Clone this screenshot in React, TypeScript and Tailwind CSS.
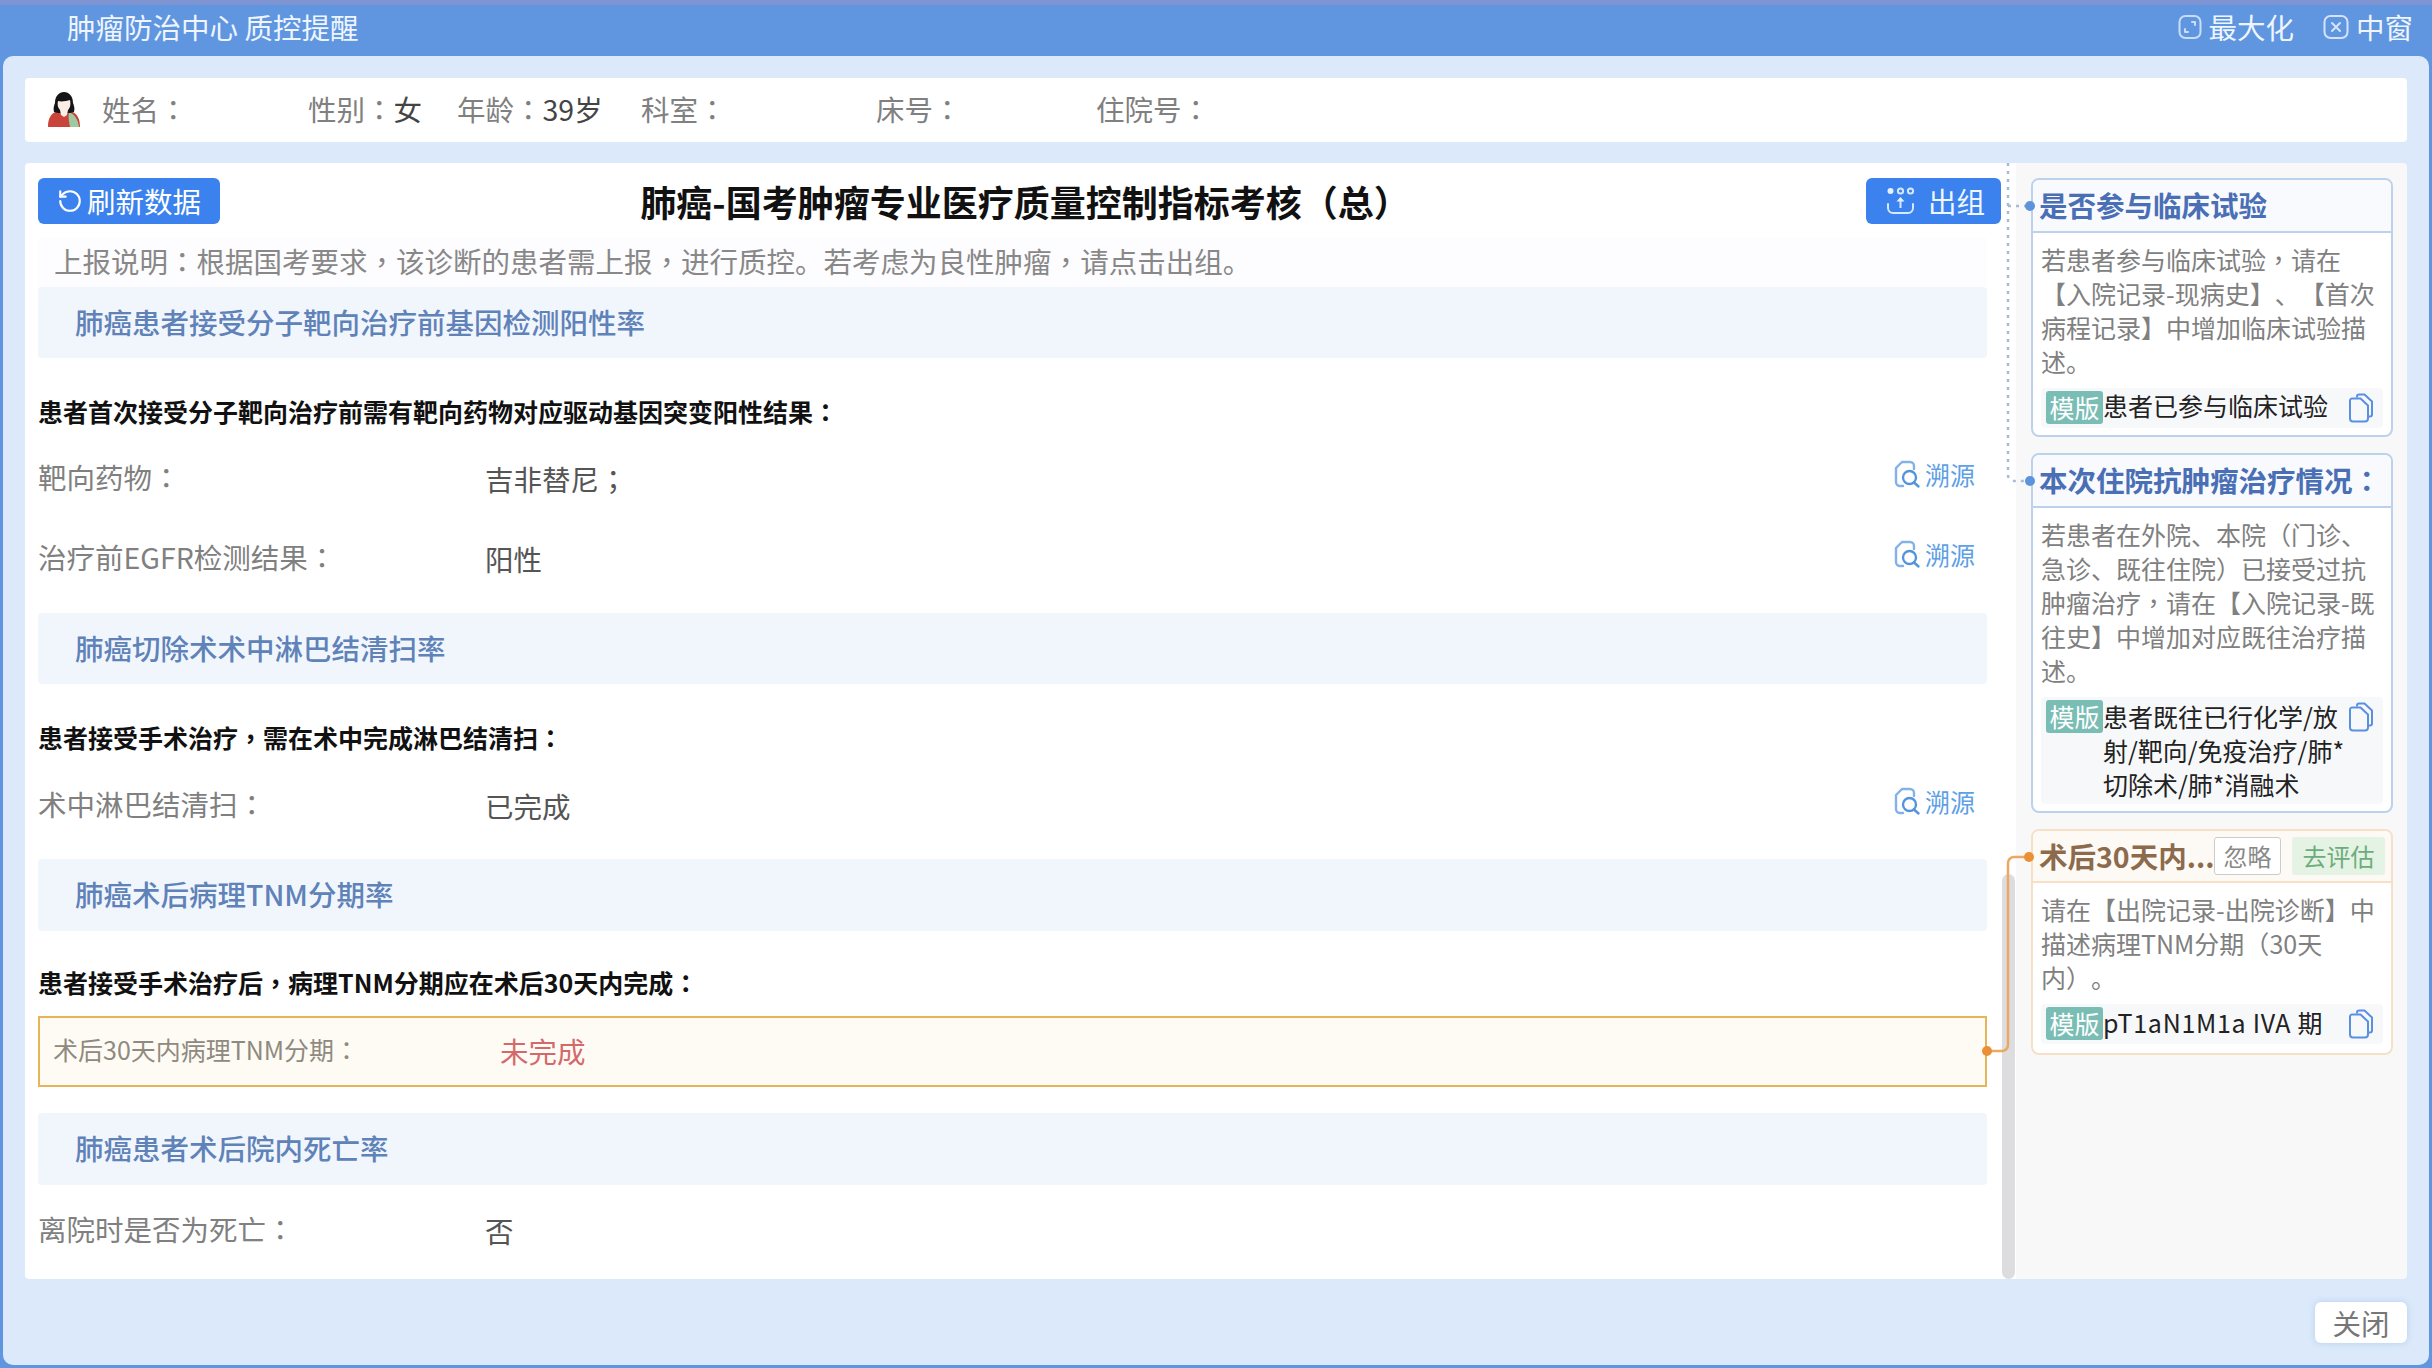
import { RotateCcw } from "lucide-react";
import type { ReactNode } from "react";

const FONT = "font-['Noto_Sans_CJK_SC','Noto_Sans',sans-serif]";

function P(text: string): ReactNode {
  return text.split(/([，：；（）])/).map((part, i) =>
    /^[，：；（）]$/.test(part) ? (
      <span key={i} className="font-['Noto_Sans_CJK_TC','Noto_Sans_CJK_SC',sans-serif]">
        {part}
      </span>
    ) : (
      part
    ),
  );
}

function Avatar() {
  return (
    <svg width="34" height="36" viewBox="0 0 34 36" className="shrink-0">
      <path d="M1 36c0-9 3-14 10-16l6 3 6-3c7 2 10 7 10 16z" fill="#c9443a" />
      <path d="M22 21c5 2 9 7 10 15h-9c-1-5-2-10-1-15z" fill="#9dcaa0" />
      <path d="M7 21c-1-4 0-6 1-9 0-7 4-11 9-11s9 4 9 11c1 3 2 5 1 9l-4 1-12 0z" fill="#151515" />
      <path d="M11 10c3 1 9 0 12-1 1 5 0 8-2 10l-1 5-3 2-3-2-1-5c-2-2-3-5-2-9z" fill="#fbeee6" />
    </svg>
  );
}

function GroupOutIcon() {
  return (
    <svg width="30" height="30" viewBox="0 0 30 30" fill="none" stroke="#d6e8fd" strokeWidth="2" className="shrink-0">
      <circle cx="4.5" cy="5" r="3" fill="#e6f1fe" stroke="none" />
      <circle cx="14.5" cy="5" r="2.6" />
      <circle cx="24.5" cy="5" r="2.6" />
      <path d="M14.5 22V13" />
      <path d="M10.5 15.5l4-4.5 4 4.5z" fill="#e6f1fe" stroke="none" />
      <path d="M2 18v4a5 5 0 0 0 5 5h15a5 5 0 0 0 5-5v-4" strokeLinecap="round" />
    </svg>
  );
}

function MaxIcon() {
  return (
    <svg width="24" height="26" viewBox="0 0 24 26" fill="none" stroke="#c9ddf7" strokeWidth="2" className="shrink-0">
      <rect x="1.5" y="2" width="21" height="22" rx="6" />
      <path d="M14 8h3v3M10 18H7v-3" strokeLinecap="round" strokeLinejoin="round" />
    </svg>
  );
}

function CloseIcon() {
  return (
    <svg width="26" height="26" viewBox="0 0 26 26" fill="none" stroke="#d3e4f9" strokeWidth="2" className="shrink-0">
      <rect x="1.5" y="2" width="23" height="22" rx="6" />
      <path d="M9 9l8 8M17 9l-8 8" strokeLinecap="round" />
    </svg>
  );
}

function TraceIcon() {
  return (
    <svg width="27" height="29" viewBox="0 0 27 29" fill="none" stroke="#82b2e8" strokeWidth="2.4" className="shrink-0">
      <path d="M9 26H6a4 4 0 0 1-4-4V8l6-6h8a4 4 0 0 1 4 4v3" strokeLinecap="round" strokeLinejoin="round" />
      <circle cx="15.5" cy="17.5" r="6.5" stroke="#5594dc" />
      <path d="M20 22.5l4.5 4" stroke="#5594dc" strokeLinecap="round" />
    </svg>
  );
}

function CopyIcon() {
  return (
    <svg width="26" height="30" viewBox="0 0 26 30" fill="none" stroke="#5a90e2" strokeWidth="2" strokeLinejoin="round" className="shrink-0">
      <path d="M9 4.5V3.5a2 2 0 0 1 2-2h5.5L24 8.5v13a2 2 0 0 1-2 2h-2" />
      <path d="M4 5.5h8.5L20 12.5v13a3 3 0 0 1-3 3H5a3 3 0 0 1-3-3v-18a2 2 0 0 1 2-2z" />
    </svg>
  );
}

function Section({ children, className }: { children: ReactNode; className: string }) {
  return (
    <div className={`flex items-center rounded-[4px] bg-[#f1f6fd] pb-[2px] pl-[37px] text-[28.5px] font-medium leading-[40px] text-[#5f82b8] ${className}`}>
      {children}
    </div>
  );
}

function Rule({ children, className }: { children: string; className: string }) {
  return <div className={`h-[40px] text-[25px] font-bold leading-[38px] text-[#111] ${className}`}>{P(children)}</div>;
}

function Row({ label, value, trace = true, className }: { label: string; value: string; trace?: boolean; className: string }) {
  return (
    <div className={`flex h-[40px] items-center pb-[2px] text-[28.5px] leading-[40px] ${className}`}>
      <span className="w-[447px] shrink-0 text-[#808080]">{P(label)}</span>
      <span className="relative top-[2px] flex-1 text-[#555]">{P(value)}</span>
      {trace && (
        <span className="relative -top-[3px] flex items-center gap-[4px] pr-[12px] text-[25px] text-[#5f9fe6]">
          <TraceIcon />
          溯源
        </span>
      )}
    </div>
  );
}

function Template({ children, className = "" }: { children: ReactNode; className?: string }) {
  return (
    <div className={`mt-[10px] flex items-start rounded-[4px] bg-[#f7f8fa] pl-[5px] pr-[9px] ${className}`}>
      <span className="mt-[3px] flex h-[33px] w-[57px] shrink-0 items-center justify-center rounded-[3px] bg-[#79bdb5] text-[25px] leading-[33px] text-white">
        模版
      </span>
      <div className="min-w-0 flex-1 pt-[2px] text-[25px] leading-[34px] text-[#222]">{children}</div>
      <span className="mt-[5px]">
        <CopyIcon />
      </span>
    </div>
  );
}

function AdviceCard({ title, children, height }: { title: string; children: ReactNode; height: string }) {
  return (
    <div className={`w-[362px] overflow-hidden rounded-[8px] border-2 border-[#bcd2ec] bg-white ${height}`}>
      <div className="flex h-[53px] items-center border-b-2 border-[#bcd2ec] bg-[#f8fafd] pl-[6px] text-[28.5px] font-bold text-[#4a6fb5]">
        {P(title)}
      </div>
      <div className="px-[8px] pt-[9px]">{children}</div>
    </div>
  );
}

function Connectors() {
  return (
    <svg width="60" height="1116" viewBox="0 0 60 1116" fill="none" className="absolute left-[1955px] top-0 z-10">
      <path d="M28 0V312a6 6 0 0 0 6 6h15" stroke="#a9bad4" strokeWidth="2.5" strokeDasharray="3 5" />
      <path d="M28 43h20" stroke="#a9bad4" strokeWidth="2.5" strokeDasharray="3 5" />
      <circle cx="50" cy="43" r="5" fill="#5d93dc" />
      <circle cx="50" cy="318" r="5" fill="#5d93dc" />
      <path d="M7 888h15a6 6 0 0 0 6-6V700a6 6 0 0 1 6-6h15" stroke="#eca862" strokeWidth="2.5" />
      <circle cx="7" cy="888" r="5" fill="#ea8f35" />
      <circle cx="49" cy="694" r="5" fill="#ea8f35" />
    </svg>
  );
}

export default function App() {
  return (
    <div className={`h-[1368px] w-[2432px] overflow-hidden bg-[#6096e0] [text-spacing-trim:space-all] ${FONT}`}>
      <div className="h-[5px] bg-[#7f94d2]" />
      <header className="flex h-[51px] items-center pb-[7px] pl-[67px] pr-[19px] text-[28.5px] text-[#eef5fe]">
        <span className="flex-1">肿瘤防治中心 质控提醒</span>
        <span className="flex items-center gap-[6px]">
          <MaxIcon />
          最大化
        </span>
        <span className="ml-[29px] flex items-center gap-[7px]">
          <CloseIcon />
          中窗
        </span>
      </header>

      <main className="mx-[3px] flex h-[1309px] flex-col rounded-[10px] bg-[#dbe9fa] px-[22px] pt-[22px]">
        <section className="flex h-[64px] items-center rounded-[4px] bg-white pb-[2px] pl-[22px] text-[28.5px] leading-[40px] text-[#808080]">
          <Avatar />
          <span className="ml-[21px] w-[206px]">{P("姓名：")}</span>
          <span className="w-[149px]">
            {P("性别：")}
            <span className="text-[#444]">女</span>
          </span>
          <span className="w-[184px]">
            {P("年龄：")}
            <span className="text-[#444]">39岁</span>
          </span>
          <span className="w-[235px]">{P("科室：")}</span>
          <span className="w-[220px]">{P("床号：")}</span>
          <span>{P("住院号：")}</span>
        </section>

        <div className="relative mt-[21px] flex h-[1116px]">
          <section className="w-[1991px] shrink-0 rounded-l-[4px] bg-white pl-[13px] pr-[29px] pt-[15px]">
            <div className="flex h-[46px] items-center">
              <button className="flex h-[46px] w-[182px] items-center justify-center gap-[4px] rounded-[6px] bg-[#3b82ee] text-[28.5px] text-white">
                <RotateCcw size={26} strokeWidth={2} />
                刷新数据
              </button>
              <h1 className="flex-1 pr-[36px] text-center text-[36px] font-bold leading-[46px] text-[#111]">
                {P("肺癌-国考肿瘤专业医疗质量控制指标考核（总）")}
              </h1>
              <button className="-mr-[14px] flex h-[46px] w-[135px] items-center justify-start gap-[12px] rounded-[6px] bg-[#3b82ee] pl-[20px] text-[28.5px] text-[#eef6ff]">
                <GroupOutIcon />
                出组
              </button>
            </div>

            <div className="mt-[14px] flex h-[49px] items-center whitespace-pre bg-[#fdfcfe] pb-[2px] pl-[16px] text-[28.5px] text-[#888]">
              <span>{P("上报说明：根据国考要求，该诊断的患者需上报，进行质控。若考虑为良性肿瘤，请点击出组。")}</span>
            </div>

            <Section className="h-[71px]">肺癌患者接受分子靶向治疗前基因检测阳性率</Section>
            <Rule className="mt-[34px]">患者首次接受分子靶向治疗前需有靶向药物对应驱动基因突变阳性结果：</Rule>
            <Row className="mt-[26px]" label="靶向药物：" value="吉非替尼；" />
            <Row className="mt-[40px]" label="治疗前EGFR检测结果：" value="阳性" />

            <Section className="mt-[35px] h-[71px]">肺癌切除术术中淋巴结清扫率</Section>
            <Rule className="mt-[34px]">患者接受手术治疗，需在术中完成淋巴结清扫：</Rule>
            <Row className="mt-[27px]" label="术中淋巴结清扫：" value="已完成" />

            <Section className="mt-[34px] h-[72px]">肺癌术后病理TNM分期率</Section>
            <Rule className="mt-[32px]">患者接受手术治疗后，病理TNM分期应在术后30天内完成：</Rule>
            <div className="mt-[13px] flex h-[71px] items-center border-2 border-[#e8b458] bg-[#fefbf4] pb-[3px] pl-[13px]">
              <span className="w-[447px] shrink-0 text-[25px] text-[#8f8a80]">{P("术后30天内病理TNM分期：")}</span>
              <span className="relative top-[1px] text-[28.5px] text-[#d4696c]">未完成</span>
            </div>

            <Section className="mt-[26px] h-[72px]">肺癌患者术后院内死亡率</Section>
            <Row className="mt-[25px]" label="离院时是否为死亡：" value="否" trace={false} />
          </section>

          <aside className="flex flex-1 flex-col items-start gap-[16px] rounded-r-[4px] bg-[#f8f8f9] pl-[15px] pt-[15px]">
            <AdviceCard title="是否参与临床试验" height="h-[259px]">
              <p className="text-[25px] leading-[34px] text-[#808080]">
                {P("若患者参与临床试验，请在【入院记录-现病史】、【首次病程记录】中增加临床试验描述。")}
              </p>
              <Template className="h-[40px]">
                <span className="relative -top-[2px]">患者已参与临床试验</span>
              </Template>
            </AdviceCard>

            <AdviceCard title="本次住院抗肿瘤治疗情况：" height="h-[360px]">
              <p className="text-[25px] leading-[34px] text-[#808080]">
                {P("若患者在外院、本院（门诊、急诊、既往住院）已接受过抗肿瘤治疗，请在【入院记录-既往史】中增加对应既往治疗描述。")}
              </p>
              <Template className="h-[107px]">
                患者既往已行化学/放射/靶向/免疫治疗/肺*切除术/肺*消融术
              </Template>
            </AdviceCard>

            <div className="w-[362px] overflow-hidden rounded-[8px] border-2 border-[#f6e0c8] bg-white">
              <div className="flex h-[52px] items-center border-b-2 border-[#f6e0c8] bg-[#fdf9f5] pl-[6px] pr-[6px] text-[28.5px] font-bold text-[#8b6b4c]">
                <span className="w-[175px] shrink-0 whitespace-nowrap">术后30天内...</span>
                <span className="flex h-[38px] w-[67px] shrink-0 items-center justify-center rounded-[3px] border border-[#ccc] bg-white text-[24px] font-normal text-[#888]">
                  忽略
                </span>
                <span className="ml-[11px] flex h-[38px] flex-1 items-center justify-center rounded-[3px] bg-[#e4f3e4] text-[24px] font-normal text-[#6dad7c]">
                  去评估
                </span>
              </div>
              <div className="px-[8px] pt-[9px]">
                <p className="text-[25px] leading-[34px] text-[#808080]">{P("请在【出院记录-出院诊断】中描述病理TNM分期（30天内）。")}</p>
                <Template className="h-[40px]">
                  <span className="relative -top-[1px] whitespace-nowrap tracking-[0.7px]">pT1aN1M1a IVA 期</span>
                </Template>
                <div className="h-[9px]" />
              </div>
            </div>
          </aside>

          <div className="absolute bottom-0 left-[1977px] top-[711px] w-[13px] rounded-[7px] bg-[#dddde0]" />
          <Connectors />
        </div>

        <div className="flex justify-end pt-[23px]">
          <button className="h-[41px] w-[92px] rounded-[6px] bg-white text-[28.5px] leading-[41px] text-[#777] shadow-[0_0_6px_rgba(120,160,220,0.35)]">
            关闭
          </button>
        </div>
      </main>
    </div>
  );
}
